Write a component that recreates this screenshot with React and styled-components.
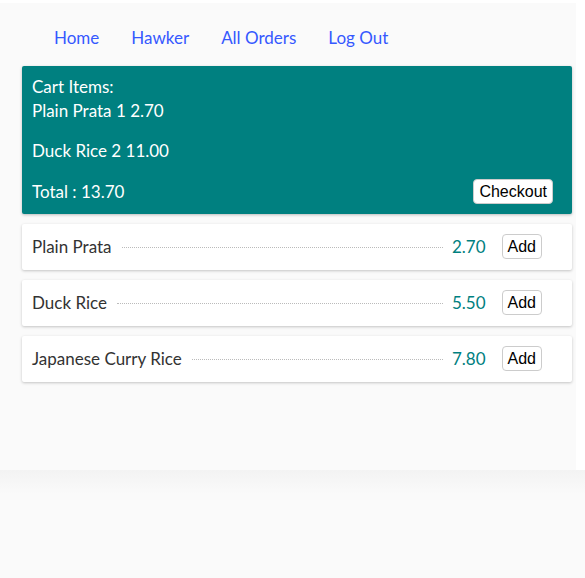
import styled, { createGlobalStyle } from "styled-components";

const GlobalStyle = createGlobalStyle`
  html, body {
    margin: 0;
    padding: 0;
    background: #ffffff;
  }
  body {
    font-family: Lato, "Open Sans", sans-serif;
  }
`;

const Page = styled.div`
  width: 576px;
  height: 467px;
  margin-top: 3px;
  background: #fafafa;
  box-sizing: border-box;
  padding: 0 4px 0 22px;
`;

const Footer = styled.div`
  height: 108px;
  background: linear-gradient(#f3f3f3, #fafafa 24px, #fafafa);
`;

const Nav = styled.nav`
  display: flex;
  height: 63px;
  align-items: center;
  padding: 5px 0 0 16px;
  box-sizing: border-box;
`;

const NavLink = styled.a`
  padding: 0 16px;
  font-size: 17px;
  color: #3558ff;
  text-decoration: none;
  cursor: pointer;
`;

const CartCard = styled.div`
  background: #008080;
  color: #ffffff;
  padding: 9px 19px 10px 10px;
  border-radius: 2px;
  box-shadow: 0 1px 3px rgba(0, 0, 0, 0.25);
  font-size: 17px;
  line-height: 24px;
`;

const CartLine = styled.p`
  margin: ${(p) => (p.$first ? "0" : "16px")} 0 0;
`;

const TotalRow = styled.div`
  display: flex;
  justify-content: space-between;
  align-items: center;
  margin-top: 16px;
`;

const Button = styled.button`
  font-family: "Liberation Sans", Arial, sans-serif;
  font-size: 16px;
  color: #000;
  background: #ffffff;
  border: 1px solid #cccccc;
  border-radius: 4px;
  padding: 2px 5px;
  height: 25px;
  line-height: 19px;
  cursor: pointer;
`;

const Menu = styled.div`
  display: flex;
  flex-direction: column;
  gap: 10px;
  margin-top: 10px;
`;

const ItemCard = styled.div`
  display: flex;
  align-items: center;
  height: 46px;
  background: #ffffff;
  border-radius: 2px;
  box-shadow: 0 1px 3px rgba(0, 0, 0, 0.22);
  padding: 0 30px 2px 10px;
  box-sizing: border-box;
  font-size: 17px;
  color: #333;
`;

const Dots = styled.span`
  flex: 1;
  margin: 2px 9px 0 10px;
  border-bottom: 1px dotted #bbbbbb;
`;

const Price = styled.span`
  color: #008080;
  margin-right: 16px;
`;

const cart = [
  { name: "Plain Prata", qty: 1, price: "2.70" },
  { name: "Duck Rice", qty: 2, price: "11.00" },
];

const menu = [
  { name: "Plain Prata", price: "2.70" },
  { name: "Duck Rice", price: "5.50" },
  { name: "Japanese Curry Rice", price: "7.80" },
];

const App = () => {
  return (
    <>
      <GlobalStyle />
      <Page>
        <Nav>
          <NavLink>Home</NavLink>
          <NavLink>Hawker</NavLink>
          <NavLink>All Orders</NavLink>
          <NavLink>Log Out</NavLink>
        </Nav>
        <CartCard>
          <div>Cart Items:</div>
          {cart.map((c, i) => (
            <CartLine key={c.name} $first={i === 0}>
              {c.name} {c.qty} {c.price}
            </CartLine>
          ))}
          <TotalRow>
            <span>Total : 13.70</span>
            <Button>Checkout</Button>
          </TotalRow>
        </CartCard>
        <Menu>
          {menu.map((m) => (
            <ItemCard key={m.name}>
              <span>{m.name}</span>
              <Dots />
              <Price>{m.price}</Price>
              <Button>Add</Button>
            </ItemCard>
          ))}
        </Menu>
      </Page>
      <Footer />
    </>
  );
};

export default App;
